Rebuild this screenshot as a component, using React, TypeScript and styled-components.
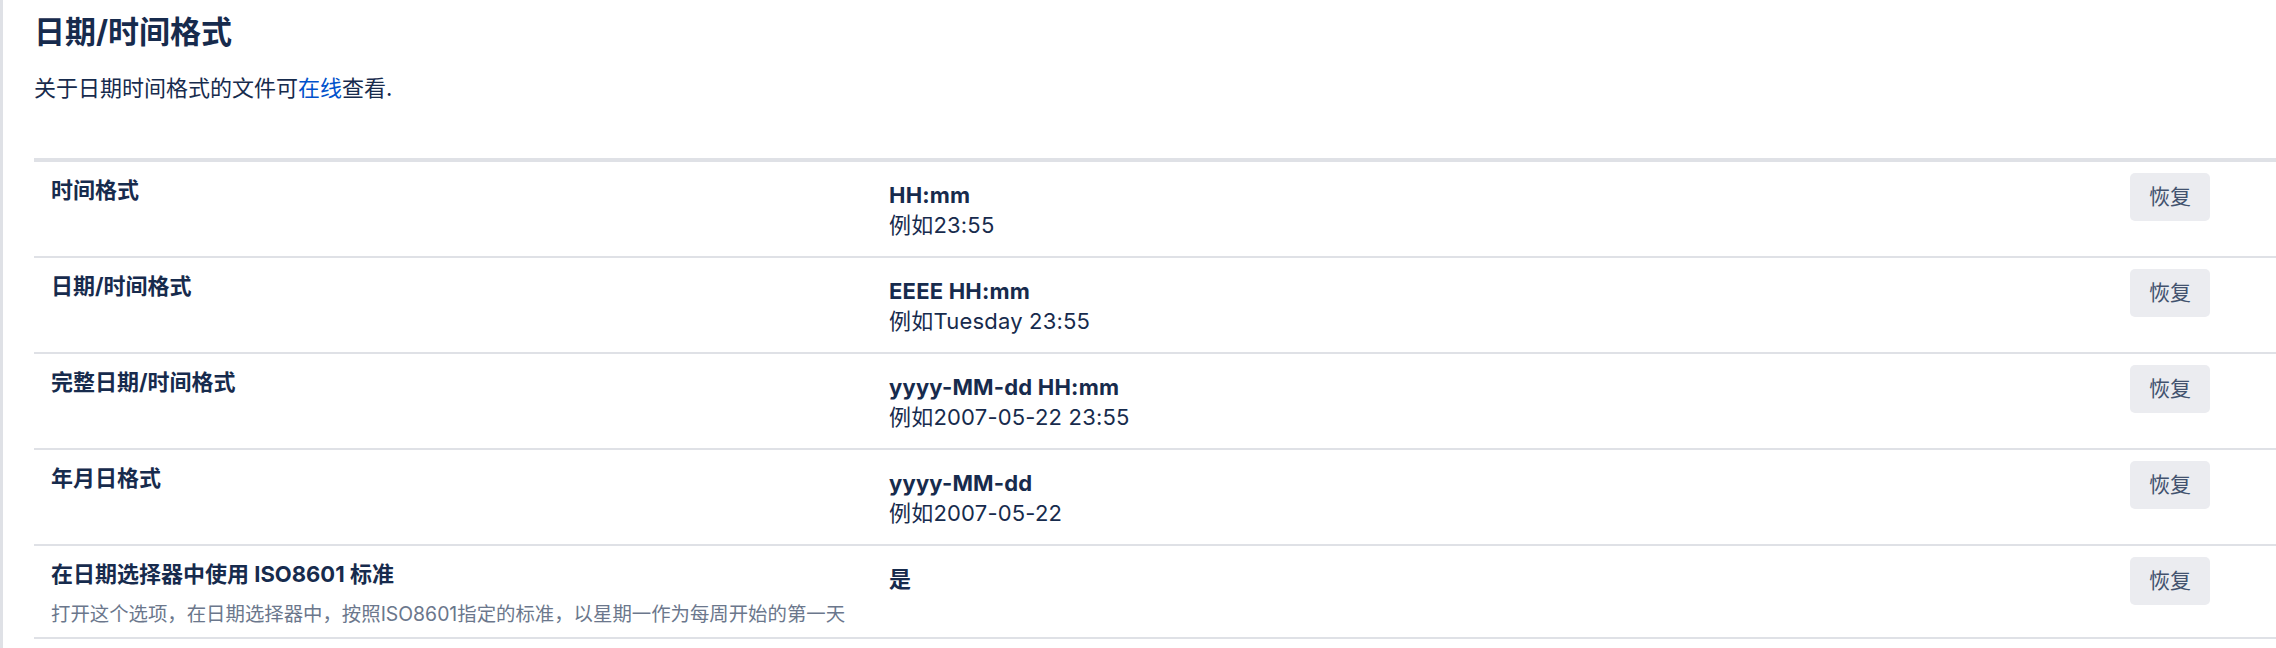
import React from "react";
import styled, { createGlobalStyle } from "styled-components";

const GlobalStyle = createGlobalStyle`
  html, body {
    margin: 0;
    padding: 0;
    background: #ffffff;
  }
  body {
    font-family: Inter, "Noto Sans CJK SC", "Noto Sans", sans-serif;
    color: #172b4d;
    -webkit-font-smoothing: antialiased;
  }
  * { box-sizing: border-box; }
`;

const Page = styled.div`
  min-height: 648px;
  border-left: 3px solid #dfe1e6;
  padding: 14px 0 0 31px;
  overflow: hidden;
`;

const Title = styled.h2`
  margin: 0;
  font-size: 31px;
  line-height: 36px;
  font-weight: 700;
  color: #172b4d;
`;

const Intro = styled.p`
  margin: 23px 0 0;
  font-size: 22px;
  line-height: 30px;
  color: #172b4d;
`;

const Link = styled.a`
  color: #0052cc;
  text-decoration: none;
`;

const Table = styled.div`
  margin-top: 55px;
  border-top: 4px solid #dfe1e6;
`;

const Row = styled.div`
  display: grid;
  grid-template-columns: 838px 1241px 1fr;
  align-items: start;
  border-bottom: 2px solid #dfe1e6;
`;

const LabelCell = styled.div`
  padding: 13px 17px 10px;
`;

const Label = styled.div`
  font-size: 22px;
  line-height: 30px;
  font-weight: 700;
  color: #172b4d;
`;

const Description = styled.div`
  margin-top: 12px;
  font-size: 19.4px;
  line-height: 26px;
  color: #6b778c;
`;

const ValueCell = styled.div`
  padding: 18px 17px 16px;
  font-size: 22px;
  line-height: 30px;
  letter-spacing: 0.2px;
  color: #172b4d;
`;

const Format = styled.div`
  font-weight: 700;
`;

const Example = styled.div`
  font-weight: 400;
`;

const ActionCell = styled.div`
  padding: 11px 17px 0;
`;

const RestoreButton = styled.button`
  width: 80px;
  height: 48px;
  border: none;
  border-radius: 5px;
  background: #ebecf0;
  color: #42526e;
  font-family: inherit;
  font-size: 21px;
  line-height: 48px;
  padding: 0;
  cursor: pointer;
`;

type Setting = {
  label: string;
  description?: string;
  format: string;
  example?: string;
};

const settings: Setting[] = [
  { label: "时间格式", format: "HH:mm", example: "例如23:55" },
  { label: "日期/时间格式", format: "EEEE HH:mm", example: "例如Tuesday 23:55" },
  { label: "完整日期/时间格式", format: "yyyy-MM-dd HH:mm", example: "例如2007-05-22 23:55" },
  { label: "年月日格式", format: "yyyy-MM-dd", example: "例如2007-05-22" },
  {
    label: "在日期选择器中使用 ISO8601 标准",
    description:
      "打开这个选项，在日期选择器中，按照ISO8601指定的标准，以星期一作为每周开始的第一天",
    format: "是",
  },
];

export default function App() {
  return (
    <>
      <GlobalStyle />
      <Page>
        <Title>日期/时间格式</Title>
        <Intro>
          关于日期时间格式的文件可<Link href="#">在线</Link>查看.
        </Intro>
        <Table>
          {settings.map((s) => (
            <Row key={s.label}>
              <LabelCell>
                <Label>{s.label}</Label>
                {s.description && <Description>{s.description}</Description>}
              </LabelCell>
              <ValueCell>
                <Format>{s.format}</Format>
                {s.example && <Example>{s.example}</Example>}
              </ValueCell>
              <ActionCell>
                <RestoreButton>恢复</RestoreButton>
              </ActionCell>
            </Row>
          ))}
        </Table>
      </Page>
    </>
  );
}
